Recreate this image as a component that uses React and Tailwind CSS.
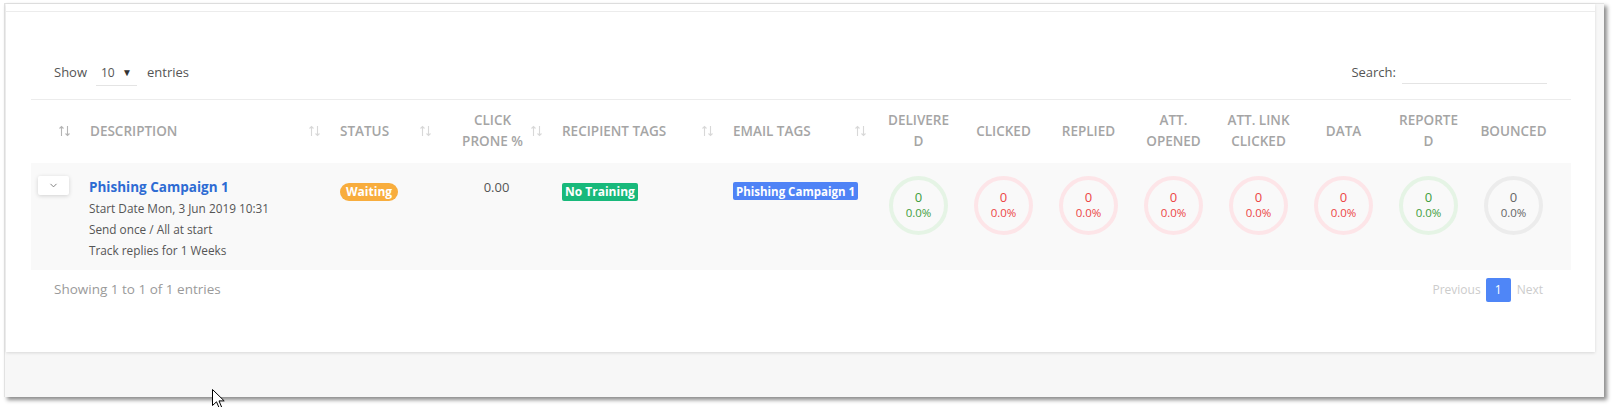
import { ChevronDown } from "lucide-react";

const stats = [
  { label: ["DELIVERE", "D"], tone: "green" },
  { label: ["CLICKED"], tone: "red" },
  { label: ["REPLIED"], tone: "red" },
  { label: ["ATT.", "OPENED"], tone: "red" },
  { label: ["ATT. LINK", "CLICKED"], tone: "red" },
  { label: ["DATA"], tone: "red" },
  { label: ["REPORTE", "D"], tone: "green" },
  { label: ["BOUNCED"], tone: "gray" },
];

const tones = {
  green: "border-[#e5f4e5] text-[#3f9e3f]",
  red: "border-[#fde5e8] text-[#ec4646]",
  gray: "border-[#ececec] text-[#666666]",
};

const SortIcon = ({ dark }) => (
  <svg
    width="13"
    height="12"
    viewBox="0 0 13 12"
    fill="none"
    stroke={dark ? "#b5b5b5" : "#d8d8d8"}
    strokeWidth="1.1"
    className="absolute right-[9px] top-1/2 -translate-y-1/2"
  >
    {/* up arrow */}
    <path d="M3.5 11V1.5M1.5 3.5L3.5 1.5L5.5 3.5" />
    {/* down arrow */}
    <path d="M9.5 1V10.5M7.5 8.5L9.5 10.5L11.5 8.5" />
  </svg>
);

const HeadCell = ({ children, center, dark }) => (
  <th
    className={`relative pl-[10px] pr-[18px] align-middle font-semibold ${
      center ? "text-center" : "text-left"
    }`}
  >
    {children}
    <SortIcon dark={dark} />
  </th>
);

const Cursor = () => (
  <svg
    width="13"
    height="20"
    viewBox="0 0 13 20"
    className="absolute left-[212px] top-[389px]"
  >
    <path
      d="M0.5 0.5V16.5L4.5 12.8L7.2 19L9.6 18L7 11.9H12.2Z"
      fill="#ffffff"
      stroke="#000000"
      strokeWidth="1"
      strokeLinejoin="miter"
    />
  </svg>
);

const App = () => {
  return (
    <div
      className="relative w-[1614px] h-[407px] overflow-hidden bg-white"
      style={{ fontFamily: '"Open Sans", "Noto Sans", sans-serif' }}
    >
      {/* Window frame */}
      <div className="ml-[4px] mt-[3px] w-[1600px] h-[394px] bg-[#f7f7f7] border-l border-t border-[#e2e2e2] shadow-[3px_3px_4px_rgba(0,0,0,0.45)]">
        {/* Card */}
        <div className="ml-[1px] w-[1589px] h-[348px] bg-white shadow-[0_1px_3px_rgba(0,0,0,0.13)]">
          <div className="h-[8px] border-b border-[#ececec]" />

          <div className="px-[25px]">
            {/* Length + search controls */}
            <div className="mt-[46px] mb-[11px] h-[30px] flex items-center justify-between px-[23px] text-[13px] text-[#555555]">
              <div className="flex items-center">
                <span>Show</span>
                <div className="ml-[9px] mr-[10px] w-[41px] h-[26px] flex items-center justify-between pl-[5px] pr-[5px] border-b border-[#e4e4e4] text-[12px]">
                  <span>10</span>
                  <span className="text-[10px] text-[#333333]">▼</span>
                </div>
                <span>entries</span>
              </div>
              <div className="flex items-center">
                <span>Search:</span>
                <div className="ml-[6px] w-[145px] h-[22px] border-b border-[#e4e4e4]" />
              </div>
            </div>

            {/* Table */}
            <table className="w-[1540px] table-fixed border-collapse">
              <colgroup>
                <col className="w-[49px]" />
                <col className="w-[250px]" />
                <col className="w-[111px]" />
                <col className="w-[111px]" />
                <col className="w-[171px]" />
                <col className="w-[153px]" />
                {stats.map((s, i) => (
                  <col key={i} className="w-[85px]" />
                ))}
                <col className="w-[15px]" />
              </colgroup>
              <thead>
                <tr className="h-[63px] border-t border-[#ececec] text-[13.5px] leading-[21px] uppercase text-[#a5a5a5]">
                  <HeadCell dark />
                  <HeadCell>Description</HeadCell>
                  <HeadCell>Status</HeadCell>
                  <HeadCell center>
                    Click
                    <br />
                    Prone %
                  </HeadCell>
                  <HeadCell>Recipient Tags</HeadCell>
                  <HeadCell>Email Tags</HeadCell>
                  {stats.map((s, i) => (
                    <th key={i} className="align-middle text-center font-semibold">
                      {s.label.map((line, j) => (
                        <div key={j}>{line}</div>
                      ))}
                    </th>
                  ))}
                  <th />
                </tr>
              </thead>
              <tbody>
                <tr className="h-[107px] bg-[#f9f9f9] align-top text-[#555555]">
                  <td className="pl-[7px] pt-[13px]">
                    <div className="w-[31px] h-[19px] bg-white rounded-[2px] shadow-[0_1px_4px_rgba(0,0,0,0.16)] flex items-center justify-center">
                      <ChevronDown size={11} strokeWidth={2} color="#777777" />
                    </div>
                  </td>
                  <td className="pl-[9px] pt-[13px]">
                    <div className="text-[13.5px] leading-[22px] font-bold text-[#2d6bd3]">
                      Phishing Campaign 1
                    </div>
                    <div className="text-[11.8px] leading-[21px]">
                      Start Date Mon, 3 Jun 2019 10:31
                    </div>
                    <div className="text-[11.8px] leading-[21px]">
                      Send once / All at start
                    </div>
                    <div className="text-[11.8px] leading-[21px]">
                      Track replies for 1 Weeks
                    </div>
                  </td>
                  <td className="pl-[10px] pt-[15px]">
                    <span className="inline-flex items-center h-[18px] px-[6px] rounded-full bg-[#f8ad3d] text-white text-[12px] font-bold">
                      Waiting
                    </span>
                  </td>
                  <td className="px-[10px] pt-[13px] text-center text-[13px] leading-[22px]">
                    0.00
                  </td>
                  <td className="pl-[10px] pt-[15px]">
                    <span className="inline-flex items-center h-[18px] px-[3px] rounded-[2px] bg-[#18b97b] text-white text-[12px] font-bold">
                      No Training
                    </span>
                  </td>
                  <td className="pl-[10px] pt-[15px]">
                    <span className="inline-flex items-center h-[18px] px-[3px] rounded-[2px] bg-[#4f83f6] text-white text-[11.5px] font-bold whitespace-nowrap">
                      Phishing Campaign 1
                    </span>
                  </td>
                  {stats.map((s, i) => (
                    <td key={i} className="pt-[13px]">
                      <div
                        className={`mx-auto w-[59px] h-[59px] rounded-full border-[4px] flex flex-col items-center justify-center ${tones[s.tone]}`}
                      >
                        <span className="text-[13px] leading-[16px]">0</span>
                        <span className="text-[11.5px] leading-[16px]">0.0%</span>
                      </div>
                    </td>
                  ))}
                  <td />
                </tr>
              </tbody>
            </table>

            {/* Footer: info + pagination */}
            <div className="h-[40px] flex items-center justify-between pl-[23px] pr-[27px]">
              <span className="text-[13.5px] text-[#9a9a9a]">
                Showing 1 to 1 of 1 entries
              </span>
              <div className="flex items-center text-[12px] text-[#cccccc]">
                <span>Previous</span>
                <span className="ml-[5px] mr-[6px] w-[25px] h-[24px] rounded-[2px] bg-[#4f86f7] text-white flex items-center justify-center">
                  1
                </span>
                <span>Next</span>
              </div>
            </div>
          </div>
        </div>
      </div>

      <Cursor />
    </div>
  );
};

export default App;
